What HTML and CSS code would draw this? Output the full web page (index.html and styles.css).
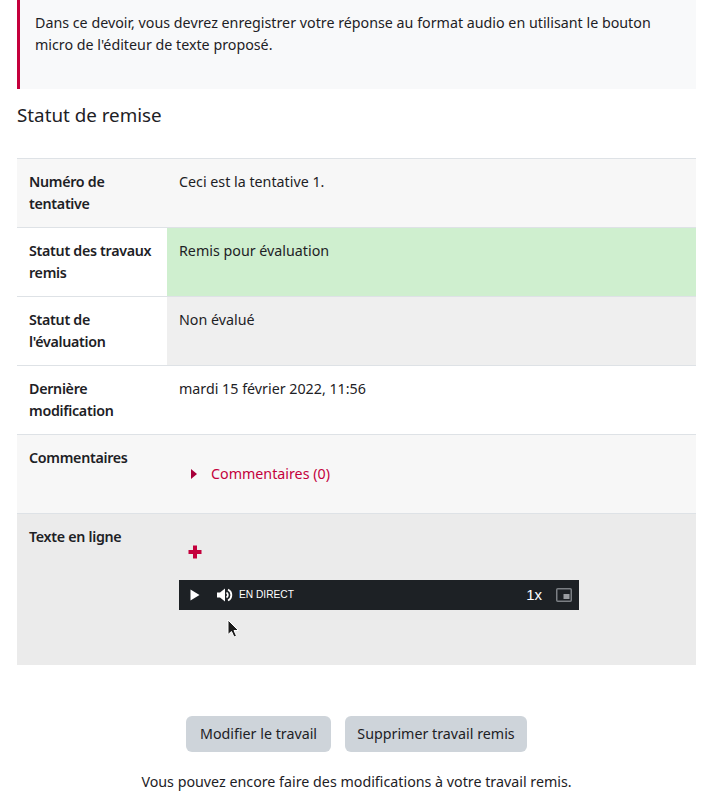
FILE: index.html
```html
<!DOCTYPE html>
<html lang="fr">
<head>
<meta charset="utf-8">
<title>Statut de remise</title>
<link rel="stylesheet" href="styles.css">
</head>
<body>
<div class="page">
  <div class="intro">
    <p>Dans ce devoir, vous devrez enregistrer votre réponse au format audio en utilisant le bouton micro de l'éditeur de texte proposé.</p>
  </div>
  <h2 class="title">Statut de remise</h2>
  <table class="status">
    <tr class="shade">
      <th>Numéro de tentative</th>
      <td>Ceci est la tentative 1.</td>
    </tr>
    <tr>
      <th>Statut des travaux remis</th>
      <td class="ok">Remis pour évaluation</td>
    </tr>
    <tr>
      <th class="shade-th">Statut de l'évaluation</th>
      <td class="neutral">Non évalué</td>
    </tr>
    <tr>
      <th>Dernière modification</th>
      <td>mardi 15 février 2022, 11:56</td>
    </tr>
    <tr class="shade">
      <th>Commentaires</th>
      <td>
        <div class="comments">
          <svg class="caret" width="6" height="10" viewBox="0 0 6 10"><path d="M0 0L6 5L0 10Z"/></svg>
          <a>Commentaires (0)</a>
        </div>
      </td>
    </tr>
    <tr class="dark">
      <th>Texte en ligne</th>
      <td class="online">
        <svg class="plus" width="14" height="14" viewBox="0 0 14 14"><path d="M5 0.5H9V5H13.5V9H9V13.5H5V9H0.5V5H5Z"/></svg>
        <div class="player">
          <svg class="ico-play" width="10" height="12" viewBox="0 0 10 12"><path d="M0.5 0.5L9.5 6L0.5 11.5Z"/></svg>
          <svg class="ico-vol" width="16" height="14" viewBox="0 0 16 14"><path class="fill" d="M0 4.5H3L8 0.5V13.5L3 9.5H0Z"/><path class="arc" d="M9.5 4.5A3 3 0 0 1 9.5 9.5M11 1.5A6.2 6.2 0 0 1 11 12.5"/></svg>
          <span class="live">EN DIRECT</span>
          <span class="speed">1x</span>
          <svg class="ico-pip" width="16" height="14" viewBox="0 0 16 14"><rect class="frame" x="0.75" y="0.75" width="14.5" height="12.5" rx="1"/><rect class="inner" x="7.5" y="6" width="6" height="5"/></svg>
        </div>
        <svg class="cursor" width="13" height="20" viewBox="0 0 13 20"><path d="M1 1V15.5L4.5 12.5L7 18L9.5 17L7 11.5H11.5Z"/></svg>
      </td>
    </tr>
  </table>
  <div class="actions">
    <button class="btn btn-edit">Modifier le travail</button>
    <button class="btn btn-delete">Supprimer travail remis</button>
  </div>
  <p class="note">Vous pouvez encore faire des modifications à votre travail remis.</p>
</div>
</body>
</html>
```

FILE: styles.css
```css
* { box-sizing: border-box; }
html, body { margin: 0; padding: 0; background: #fff; }
body {
  font-family: "Noto Sans", "Open Sans", sans-serif;
  font-size: 14.27px;
  line-height: 22px;
  color: #1d2125;
  overflow: hidden;
}
.page { width: 679px; margin-left: 17px; }
.intro {
  height: 89px;
  margin-bottom: 0;
  background: #f8f9fa;
  border-left: 3px solid #c4003c;
  padding: 12px 15px 0;
}
.intro p { margin: 0; width: 640px; }
.title {
  margin: 0;
  padding-top: 14px;
  height: 69px;
  font-size: 18.8px;
  font-weight: 400;
  line-height: 24px;
}
.status { width: 679px; border-collapse: collapse; table-layout: fixed; }
.status tr { height: 69px; }
.status th, .status td {
  border-top: 1px solid #dee2e6;
  padding: 12px;
  text-align: left;
  vertical-align: top;
}
.status th { width: 150px; font-weight: 600; letter-spacing: -0.3px; }
.shade { background: #f7f7f7; }
.shade-th { background: #fff; }
.dark { background: #ebebeb; }
.ok { background: #cfefcf; }
.neutral { background: #efefef; }
.comments { display: flex; align-items: center; gap: 14px; padding: 13px 0 15px 12px; height: 56px; margin-bottom: -2px; }
.caret { fill: #a8003a; flex: none; }
.comments a { color: #c4003c; }
.online { position: relative; height: 151px; padding-top: 31px; }
.plus { display: block; margin: 19px 0 0 9px; fill: #c4003c; }
.player {
  display: flex;
  align-items: center;
  width: 400px;
  height: 30px;
  margin-top: 21px;
  padding: 0 7px 0 11px;
  background: #1d2125;
  color: #fff;
}
.ico-play { fill: #fff; flex: none; }
.ico-vol { margin-left: 17px; flex: none; }
.fill { fill: #fff; }
.arc { fill: none; stroke: #fff; stroke-width: 1.8; }
.live { margin-left: 6px; font-family: "Liberation Sans", sans-serif; font-size: 10.2px; }
.speed { margin-left: auto; font-size: 15px; font-family: "Liberation Sans", sans-serif; }
.ico-pip { margin-left: 14px; flex: none; }
.frame { fill: none; stroke: #7b7f84; stroke-width: 1.5; }
.inner { fill: #9a9da1; }
.cursor { position: absolute; left: 60px; top: 105px; fill: #1b1b1b; stroke: #fff; stroke-width: 1; }
.actions { display: flex; justify-content: center; gap: 14px; margin-top: 51px; }
.btn {
  height: 36px;
  padding: 0;
  border: 0;
  border-radius: 6px;
  background: #ced4da;
  color: #1d2125;
  font: inherit;
}
.btn-edit { width: 145px; }
.btn-delete { width: 182px; }
.note { margin: 19px 0 0; text-align: center; }
```
